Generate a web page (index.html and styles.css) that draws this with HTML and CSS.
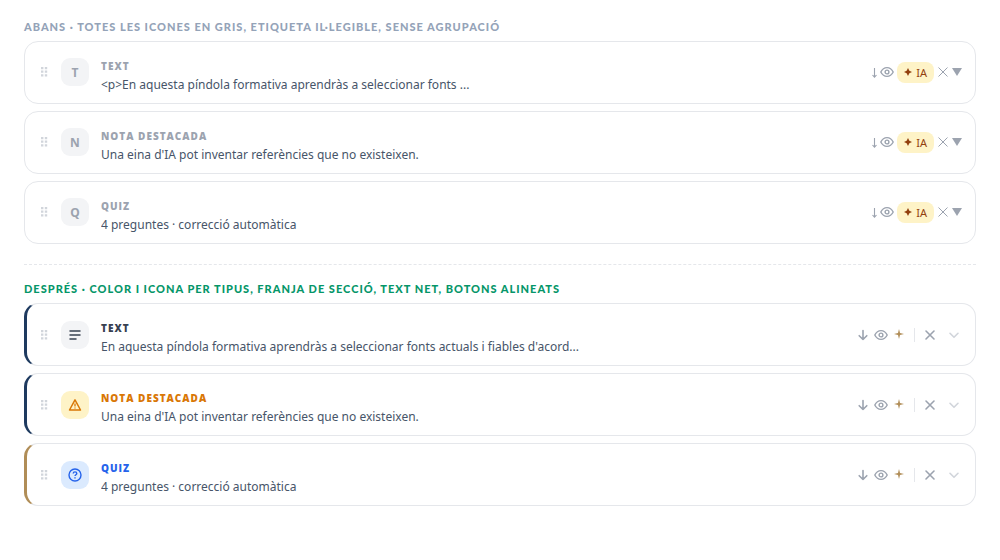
FILE: index.html
```
<!DOCTYPE html>
<html lang="ca">
<head>
    <meta charset="UTF-8">
    <meta name="viewport" content="width=device-width, initial-scale=1.0">
    <title>Blocs - abans i després</title>
    <link rel="stylesheet" href="styles.css">
</head>
<body>
<!-- shared icons -->
<svg class="sprite" aria-hidden="true">
    <symbol id="grip" viewBox="0 0 8 12">
        <path d="M0 1h2.400v2.200H0zM3.800 1h2.400v2.200H3.800zM0 4.600h2.400v2.200H0zM3.800 4.600h2.400v2.200H3.800zM0 8.200h2.400v2.200H0zM3.800 8.200h2.400v2.200H3.800z" fill="currentColor"/>
    </symbol>
    <symbol id="arrow-thin" viewBox="0 0 6 12">
        <path d="M3.500 2v8.500M1.500 9l2 2.200L5.500 9" fill="none" stroke="currentColor" stroke-width="1.100"/>
    </symbol>
    <symbol id="arrow" viewBox="0 0 14 14">
        <path d="M7 2.500v9M3.200 7.700L7 11.500l3.800-3.800" fill="none" stroke="currentColor" stroke-width="1.600" stroke-linecap="round" stroke-linejoin="round"/>
    </symbol>
    <symbol id="eye" viewBox="0 0 14 14">
        <path d="M.8 7C2.200 4.200 4.400 2.600 7 2.600s4.800 1.600 6.200 4.400c-1.400 2.800-3.600 4.400-6.200 4.400S2.200 9.800.8 7z" fill="none" stroke="currentColor" stroke-width="1.400"/>
        <circle cx="7" cy="7" r="1.900" fill="none" stroke="currentColor" stroke-width="1.400"/>
    </symbol>
    <symbol id="star" viewBox="0 0 10 10">
        <path d="M5 0l1 4 4 1-4 1-1 4-1-4-4-1 4-1z" fill="currentColor"/>
    </symbol>
    <symbol id="star-bold" viewBox="0 0 10 10">
        <path d="M5 0l1.700 3.300L10 5 6.700 6.700 5 10 3.300 6.700 0 5l3.300-1.700z" fill="currentColor"/>
    </symbol>
    <symbol id="cross-thin" viewBox="0 0 12 12">
        <path d="M1.500 1.500l9 9M10.500 1.500l-9 9" stroke="currentColor" stroke-width="1"/>
    </symbol>
    <symbol id="cross" viewBox="0 0 14 14">
        <path d="M3 3l8 8M11 3l-8 8" stroke="currentColor" stroke-width="1.600" stroke-linecap="round"/>
    </symbol>
    <symbol id="triangle" viewBox="0 0 10 10">
        <path d="M0 1h10L5 9z" fill="currentColor"/>
    </symbol>
    <symbol id="chevron" viewBox="0 0 14 14">
        <path d="M3 5.300l4 4 4-4" fill="none" stroke="currentColor" stroke-width="1.600" stroke-linecap="round" stroke-linejoin="round"/>
    </symbol>
    <symbol id="lines" viewBox="0 0 14 14">
        <path d="M2 3h10M2 7h10M2 11h6" stroke="currentColor" stroke-width="1.500" stroke-linecap="round"/>
    </symbol>
    <symbol id="warning" viewBox="0 0 14 14">
        <path d="M7 1.800L12.500 12h-11z" fill="none" stroke="currentColor" stroke-width="1.500" stroke-linejoin="round"/>
        <path d="M7 5.500v3M7 9.600v1" stroke="currentColor" stroke-width="1.300"/>
    </symbol>
    <symbol id="question" viewBox="0 0 14 14">
        <circle cx="7" cy="7" r="6" fill="none" stroke="currentColor" stroke-width="1.400"/>
        <path d="M5.200 5.600C5.200 4.500 6 3.900 7 3.900s1.800.600 1.800 1.600C8.800 6.700 7 6.800 7 8M7 9.300v1.200" fill="none" stroke="currentColor" stroke-width="1.400"/>
    </symbol>
</svg>

<main class="page">
    <section class="group">
        <h2 class="group-title">Abans · totes les icones en gris, etiqueta il·legible, sense agrupació</h2>
        <div class="block">
            <svg class="grip"><use href="#grip"/></svg>
            <span class="block-icon">T</span>
            <div class="block-body">
                <h3 class="block-type">Text</h3>
                <p class="block-text">&lt;p&gt;En aquesta píndola formativa aprendràs a seleccionar fonts ...</p>
            </div>
            <div class="old-actions">
                <button type="button" class="old-down" aria-label="Baixa"><svg><use href="#arrow-thin"/></svg></button>
                <button type="button" class="old-eye" aria-label="Mostra"><svg><use href="#eye"/></svg></button>
                <button type="button" class="old-ai"><svg><use href="#star-bold"/></svg>IA</button>
                <button type="button" class="old-close" aria-label="Elimina"><svg><use href="#cross-thin"/></svg></button>
                <button type="button" class="old-toggle" aria-label="Desplega"><svg><use href="#triangle"/></svg></button>
            </div>
        </div>
        <div class="block">
            <svg class="grip"><use href="#grip"/></svg>
            <span class="block-icon">N</span>
            <div class="block-body">
                <h3 class="block-type">Nota destacada</h3>
                <p class="block-text">Una eina d'IA pot inventar referències que no existeixen.</p>
            </div>
            <div class="old-actions">
                <button type="button" class="old-down" aria-label="Baixa"><svg><use href="#arrow-thin"/></svg></button>
                <button type="button" class="old-eye" aria-label="Mostra"><svg><use href="#eye"/></svg></button>
                <button type="button" class="old-ai"><svg><use href="#star-bold"/></svg>IA</button>
                <button type="button" class="old-close" aria-label="Elimina"><svg><use href="#cross-thin"/></svg></button>
                <button type="button" class="old-toggle" aria-label="Desplega"><svg><use href="#triangle"/></svg></button>
            </div>
        </div>
        <div class="block">
            <svg class="grip"><use href="#grip"/></svg>
            <span class="block-icon">Q</span>
            <div class="block-body">
                <h3 class="block-type">Quiz</h3>
                <p class="block-text">4 preguntes · correcció automàtica</p>
            </div>
            <div class="old-actions">
                <button type="button" class="old-down" aria-label="Baixa"><svg><use href="#arrow-thin"/></svg></button>
                <button type="button" class="old-eye" aria-label="Mostra"><svg><use href="#eye"/></svg></button>
                <button type="button" class="old-ai"><svg><use href="#star-bold"/></svg>IA</button>
                <button type="button" class="old-close" aria-label="Elimina"><svg><use href="#cross-thin"/></svg></button>
                <button type="button" class="old-toggle" aria-label="Desplega"><svg><use href="#triangle"/></svg></button>
            </div>
        </div>
    </section>

    <section class="group group-new">
        <h2 class="group-title">Després · color i icona per tipus, franja de secció, text net, botons alineats</h2>
        <div class="block navy type-text">
            <svg class="grip"><use href="#grip"/></svg>
            <span class="block-icon"><svg><use href="#lines"/></svg></span>
            <div class="block-body">
                <h3 class="block-type">Text</h3>
                <p class="block-text">En aquesta píndola formativa aprendràs a seleccionar fonts actuals i fiables d'acord...</p>
            </div>
            <div class="actions">
                <button type="button" aria-label="Baixa"><svg><use href="#arrow"/></svg></button>
                <button type="button" aria-label="Mostra"><svg><use href="#eye"/></svg></button>
                <button type="button" class="ai" aria-label="IA"><svg><use href="#star"/></svg></button>
                <span class="separator"></span>
                <button type="button" aria-label="Elimina"><svg><use href="#cross"/></svg></button>
                <button type="button" class="toggle" aria-label="Desplega"><svg><use href="#chevron"/></svg></button>
            </div>
        </div>
        <div class="block navy type-note">
            <svg class="grip"><use href="#grip"/></svg>
            <span class="block-icon"><svg><use href="#warning"/></svg></span>
            <div class="block-body">
                <h3 class="block-type">Nota destacada</h3>
                <p class="block-text">Una eina d'IA pot inventar referències que no existeixen.</p>
            </div>
            <div class="actions">
                <button type="button" aria-label="Baixa"><svg><use href="#arrow"/></svg></button>
                <button type="button" aria-label="Mostra"><svg><use href="#eye"/></svg></button>
                <button type="button" class="ai" aria-label="IA"><svg><use href="#star"/></svg></button>
                <span class="separator"></span>
                <button type="button" aria-label="Elimina"><svg><use href="#cross"/></svg></button>
                <button type="button" class="toggle" aria-label="Desplega"><svg><use href="#chevron"/></svg></button>
            </div>
        </div>
        <div class="block gold type-quiz">
            <svg class="grip"><use href="#grip"/></svg>
            <span class="block-icon"><svg><use href="#question"/></svg></span>
            <div class="block-body">
                <h3 class="block-type">Quiz</h3>
                <p class="block-text">4 preguntes · correcció automàtica</p>
            </div>
            <div class="actions">
                <button type="button" aria-label="Baixa"><svg><use href="#arrow"/></svg></button>
                <button type="button" aria-label="Mostra"><svg><use href="#eye"/></svg></button>
                <button type="button" class="ai" aria-label="IA"><svg><use href="#star"/></svg></button>
                <span class="separator"></span>
                <button type="button" aria-label="Elimina"><svg><use href="#cross"/></svg></button>
                <button type="button" class="toggle" aria-label="Desplega"><svg><use href="#chevron"/></svg></button>
            </div>
        </div>
    </section>
</main>
</body>
</html>
```
FILE: styles.css
```
* {
    box-sizing: border-box;
}
body {
    margin: 0;
    background: #fff;
    font-family: "Segoe UI", "Noto Sans", sans-serif;
    font-feature-settings: "locl" 0;
    color: #475569;
}
h2, h3, p {
    margin: 0;
}
svg {
    display: block;
    flex-shrink: 0;
}
.sprite {
    display: none;
}
.page {
    padding: 20px 24px;
}
.group {
    display: flex;
    flex-direction: column;
    gap: 7px;
}
.group-new {
    margin-top: 20px;
    padding-top: 17px;
    border-top: 1px dashed #e5e7eb;
}
.group-title {
    font-family: "Segoe UI", Lato, sans-serif;
    font-size: 11px;
    line-height: 14px;
    font-weight: 900;
    letter-spacing: 1px;
    text-transform: uppercase;
    color: #94a3b8;
}
.group-new .group-title {
    color: #059669;
}

/* block row */
.block {
    display: flex;
    align-items: center;
    padding: 7px 13px 8px 16px;
    border: 1px solid #e5e7eb;
    border-radius: 14px;
    background: #fff;
}
.navy, .gold {
    padding: 8px 12px 7px 14px;
    border-left: 3px solid #1e3a5f;
}
.gold {
    border-left-color: #b08d57;
}
.grip {
    width: 8px;
    height: 12px;
    margin-right: 12px;
    color: #d1d5db;
}
.block-icon {
    display: flex;
    align-items: center;
    justify-content: center;
    width: 28px;
    height: 28px;
    margin-right: 12px;
    border-radius: 9px;
    background: #f3f4f6;
    color: #9ca3af;
    font-size: 12px;
    font-weight: 700;
}
.block-icon svg {
    width: 14px;
    height: 14px;
}
.block-body {
    flex: 1;
    min-width: 0;
    padding-top: 8px;
}
.group-new .block-body {
    padding: 7px 0 1px;
}
.block-type {
    font-family: "Segoe UI", "Open Sans", sans-serif;
    font-size: 10px;
    line-height: 18px;
    font-weight: 800;
    letter-spacing: 1px;
    text-transform: uppercase;
    color: #9ca3af;
}
.block-text {
    font-size: 12px;
    line-height: 20px;
    overflow: hidden;
    text-overflow: ellipsis;
    white-space: nowrap;
}

/* type colours */
.type-text .block-icon, .type-text .block-type {
    color: #374151;
}
.type-note .block-icon, .type-note .block-type {
    color: #d97706;
}
.type-note .block-icon {
    background: #fef3c7;
}
.type-quiz .block-icon, .type-quiz .block-type {
    color: #2563eb;
}
.type-quiz .block-icon {
    background: #dbeafe;
}

/* buttons */
button {
    display: flex;
    align-items: center;
    justify-content: center;
    padding: 0;
    border: none;
    background: none;
    color: #9ca3af;
    font-family: inherit;
    cursor: pointer;
}
.old-actions {
    display: flex;
    align-items: center;
    gap: 3px;
}
.old-down svg {
    width: 6px;
    height: 12px;
}
.old-eye svg {
    width: 14px;
    height: 14px;
}
.old-ai {
    gap: 4px;
    height: 21px;
    padding: 0 7px;
    border-radius: 8px;
    background: #fef3c7;
    color: #92400e;
    font-size: 11px;
}
.old-ai svg {
    width: 8px;
    height: 8px;
}
.old-close svg {
    width: 12px;
    height: 12px;
}
.old-toggle svg {
    width: 10px;
    height: 10px;
}
.actions {
    display: flex;
    align-items: center;
}
.actions button {
    width: 18px;
    height: 18px;
}
.actions svg {
    width: 14px;
    height: 14px;
}
.actions .ai {
    padding-bottom: 3px;
    color: #b08d57;
}
.actions .ai svg {
    width: 10px;
    height: 10px;
}
.separator {
    width: 1px;
    height: 14px;
    margin: 0 6px;
    background: #e5e7eb;
}
.actions .toggle {
    margin-left: 6px;
    color: #d1d5db;
}
```
